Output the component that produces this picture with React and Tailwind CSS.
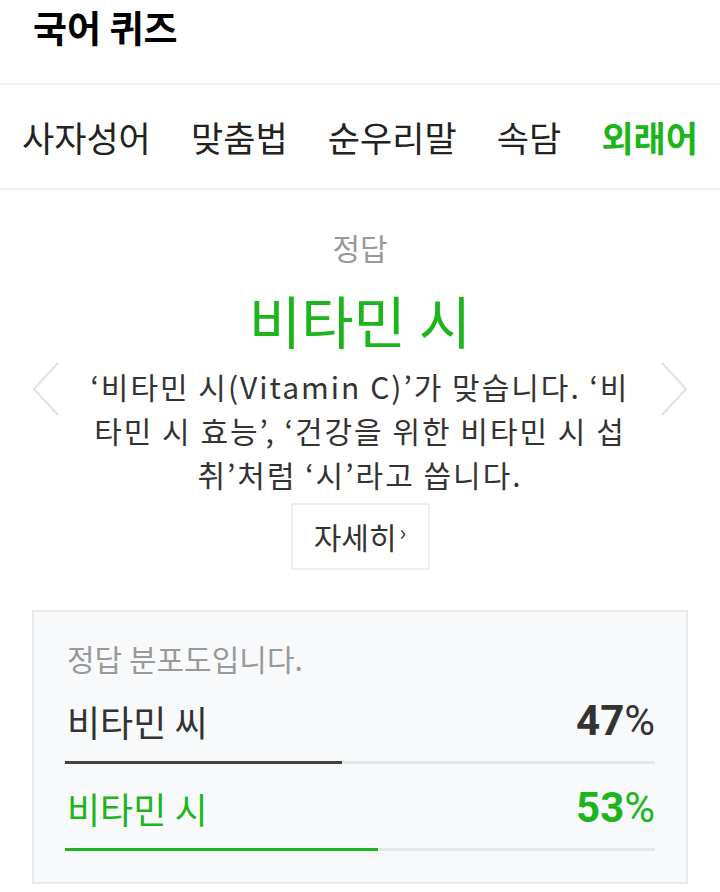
import * as React from "react";

const tabs = ["사자성어", "맞춤법", "순우리말", "속담", "외래어"];

const results = [
  { label: "비타민 씨", pct: 47, correct: false },
  { label: "비타민 시", pct: 53, correct: true },
];

function Chevron({ dir }) {
  return (
    <svg width="28" height="54" viewBox="0 0 28 54" className="shrink-0">
      <path
        d={dir === "left" ? "M26 1 L2 27 L26 53" : "M2 1 L26 27 L2 53"}
        fill="none"
        stroke="#e2e2e2"
        strokeWidth="2"
      />
    </svg>
  );
}

export default function App() {
  return (
    <div
      className="w-[720px] h-[892px] bg-white text-[#222] overflow-hidden"
      style={{ fontFamily: '"Noto Sans CJK KR", "Noto Sans", sans-serif' }}
    >
      {/* Title */}
      <div className="h-[85px] flex items-start pt-[9px] px-[33px] border-b-2 border-[#edeff1]">
        <h1 className="text-[37px] font-bold text-black leading-none">국어 퀴즈</h1>
      </div>

      {/* Tabs */}
      <div className="h-[105px] flex items-center justify-between pl-[22px] pr-[22px] border-b-2 border-[#edeff1]">
        {tabs.map((t, i) => (
          <span
            key={t}
            className={`text-[35px] leading-none ${
              i === tabs.length - 1 ? "text-[#1cb51c] font-bold" : "text-[#222]"
            }`}
          >
            {t}
          </span>
        ))}
      </div>

      {/* Answer */}
      <div className="flex flex-col items-center pt-[42px]">
        <div className="text-[30px] text-[#999] leading-none">정답</div>
        <div className="mt-[29px] text-[57px] leading-none text-[#1cb51c]">비타민 시</div>

        <div className="w-full flex items-start justify-between px-[32px] mt-[14px]">
          <Chevron dir="left" />
          <p className="text-center text-[30px] leading-[44px] tracking-[2px] text-[#333] whitespace-nowrap pt-[2px]">
            ‘비타민 시(Vitamin C)’가 맞습니다. ‘비
            <br />
            타민 시 효능’, ‘건강을 위한 비타민 시 섭
            <br />
            취’처럼 ‘시’라고 씁니다.
          </p>
          <Chevron dir="right" />
        </div>

        <button className="mt-[7px] w-[139px] h-[67px] border-2 border-[#eceeef] bg-white flex items-center justify-center text-[30px] text-[#333]">
          자세히<span className="text-[22px] ml-[3px] -mt-[10px]">›</span>
        </button>
      </div>

      {/* Distribution */}
      <div className="mx-[32px] mt-[40px] h-[274px] border-2 border-[#e7e9eb] bg-[#f8f9fa] px-[31px] pt-[31px]">
        <div className="text-[30px] text-[#999] leading-none pl-[2px]">정답 분포도입니다.</div>
        {results.map((r, i) => (
          <div key={r.label} className={i === 0 ? "mt-[27px]" : "mt-[23px]"}>
            <div
              className={`h-[42px] flex items-center justify-between leading-none pl-[2px] ${
                r.correct ? "text-[#1cb51c]" : "text-[#333]"
              }`}
            >
              <span className="text-[36px]">{r.label}</span>
              <span className="text-[42px]" style={{ fontFamily: "Roboto, sans-serif" }}>
                <span className="font-bold">{r.pct}</span>
                <span>%</span>
              </span>
            </div>
            <div className="mt-[19px] h-[3px] bg-[#e5e7e9]">
              <div
                className={`h-full ${r.correct ? "bg-[#1cb51c]" : "bg-[#444]"}`}
                style={{ width: `${r.pct}%` }}
              />
            </div>
          </div>
        ))}
      </div>
    </div>
  );
}
